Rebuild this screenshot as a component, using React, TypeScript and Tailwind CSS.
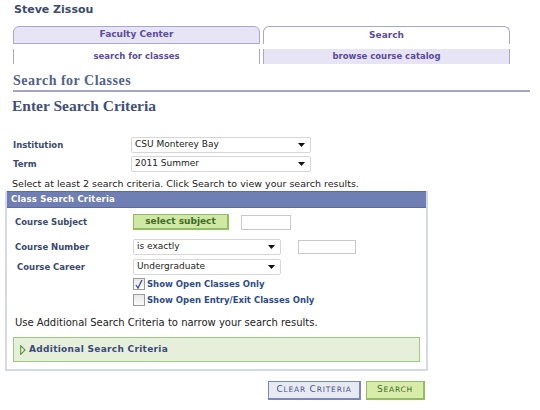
import { useState } from "react"

const sel =
  "flex h-[16px] items-center justify-between rounded-[2px] border border-[#d6d6d6] bg-white pl-[3px] pr-[5px] text-[9px] text-[#222]"

function Caret() {
  return (
    <svg width="7" height="4" viewBox="0 0 7 4">
      <path d="M0 0h7L3.5 4z" fill="#111" />
    </svg>
  )
}

function Select({ value, w }: { value: string; w: string }) {
  return (
    <div className={`${sel} ${w}`}>
      <span>{value}</span>
      <Caret />
    </div>
  )
}

function Check({ on, label }: { on: boolean; label: string }) {
  return (
    <div className="flex h-[16px] items-center gap-[2px]">
      <div className="flex h-[12px] w-[12px] items-center justify-center border border-[#9a9a9a] bg-gradient-to-b from-[#e8e8e8] to-[#fafafa]">
        {on && (
          <svg width="8" height="9" viewBox="0 0 8 9">
            <path d="M1 5l2 3L7 0" stroke="#3b4f8c" strokeWidth="1.3" fill="none" />
          </svg>
        )}
      </div>
      <span className="text-[8.5px] font-bold text-[#2c4a8c]">{label}</span>
    </div>
  )
}

export default function App() {
  const [open] = useState(false)
  return (
    <div className="relative h-[410px] w-[540px] overflow-hidden bg-white font-['DejaVu_Sans',sans-serif] text-[#222]">
      {/* nombre del usuario */}
      <div className="h-[26px] pl-[14px] pt-[2px] text-[11px] font-bold text-[#3c4b6e]">Steve Zissou</div>

      {/* pestañas */}
      <div className="flex gap-[3px] pl-[13px]">
        <div className="flex h-[18px] w-[247px] items-center justify-center rounded-t-[6px] border border-[#aaa5d8] bg-[#e7e4f6] text-[9px] font-bold text-[#5b4b9f]">
          Faculty Center
        </div>
        <div className="flex h-[18px] w-[247px] items-center justify-center rounded-t-[6px] border border-b-0 border-[#aaa5d8] bg-white text-[9px] font-bold text-[#5b4b9f]">
          Search
        </div>
      </div>
      <div className="mt-[5px] flex gap-[3px] pl-[13px]">
        <div className="flex h-[15px] w-[247px] items-center justify-center border-x border-[#aaa5d8] bg-white text-[8.5px] font-bold text-[#5b4b9f]">
          search for classes
        </div>
        <div className="flex h-[15px] w-[247px] items-center justify-center border-x border-[#aaa5d8] bg-[#e7e4f6] text-[8.5px] font-bold text-[#5b4b9f]">
          browse course catalog
        </div>
      </div>

      {/* títulos */}
      <div className="ml-[13px] mr-[10px] mt-[9px] border-b-2 border-[#a3a3cd] pb-[1px] font-['Liberation_Serif',serif] text-[14px] font-bold leading-[16px] tracking-[0.5px] text-[#52628e]">
        Search for Classes
      </div>
      <div className="ml-[12px] mt-[5px] font-['Liberation_Serif',serif] text-[15.5px] font-bold leading-[18px] text-[#3f4f7a]">
        Enter Search Criteria
      </div>

      {/* institución y periodo */}
      <div className="mt-[22px] flex flex-col gap-[3px] pl-[13px]">
        <div className="flex items-center">
          <span className="w-[118px] text-[8.5px] font-bold text-[#3a4a6e]">Institution</span>
          <Select value="CSU Monterey Bay" w="w-[180px]" />
        </div>
        <div className="flex items-center">
          <span className="w-[118px] text-[8.5px] font-bold text-[#3a4a6e]">Term</span>
          <Select value="2011 Summer" w="w-[180px]" />
        </div>
      </div>
      <div className="mt-[5px] pl-[12px] text-[9.5px] leading-[14px] text-[#222]">
        Select at least 2 search criteria. Click Search to view your search results.
      </div>

      {/* caja de criterios */}
      <div className="ml-[5px] w-[423px] border-2 border-t-0 border-[#d5d8e6]">
        <div className="flex h-[17px] items-center border-y border-[#5c6ca3] bg-[#6f7fb3] pl-[4px] text-[8.5px] font-bold tracking-[0.2px] text-white">
          Class Search Criteria
        </div>
        <div className="flex flex-col gap-[4px] pl-[8px] pt-[6px]">
          <div className="flex items-center">
            <span className="w-[118px] text-[8.5px] font-bold text-[#3a4a6e]">Course Subject</span>
            <div className="flex h-[16px] w-[96px] items-center justify-center border border-b-2 border-r-2 border-[#8fbf5f] bg-[#cfe8a3] text-[9px] font-bold text-[#3f6a2a]">
              select subject
            </div>
            <div className="ml-[12px] h-[15px] w-[50px] border border-[#c8c8c8]" />
          </div>
          <div className="mt-[5px] flex items-center">
            <span className="w-[118px] text-[8.5px] font-bold text-[#3a4a6e]">Course Number</span>
            <Select value="is exactly" w="w-[148px]" />
            <div className="ml-[17px] h-[14px] w-[58px] border border-[#c8c8c8]" />
          </div>
          <div className="flex items-center">
            <span className="w-[118px] pl-[2px] text-[8.5px] font-bold text-[#3a4a6e]">Course Career</span>
            <Select value="Undergraduate" w="w-[148px]" />
          </div>
          <div className="-mt-[3px] flex flex-col pl-[118px]">
            <Check on label="Show Open Classes Only" />
            <Check on={false} label="Show Open Entry/Exit Classes Only" />
          </div>
        </div>
        <div className="mt-[8px] pl-[8px] text-[10px] leading-[14px] text-[#222]">
          Use Additional Search Criteria to narrow your search results.
        </div>
        <div className="mx-[6px] mb-[7px] mt-[7px] flex h-[25px] items-center gap-[3px] border border-[#9ccc80] bg-[#e6efd9] pl-[6px]">
          <svg width="6" height="10" viewBox="0 0 6 10">
            <path d="M0.7 0.7L5 5L0.7 9.3z" fill={open ? "#5a9a3a" : "#fff"} stroke="#5a9a3a" strokeWidth="1.2" />
          </svg>
          <span className="text-[9px] font-bold tracking-[0.3px] text-[#3a4a7a]">Additional Search Criteria</span>
        </div>
      </div>

      {/* botones */}
      <div className="mt-[10px] flex gap-[5px] pl-[268px]">
        <div className="flex h-[19px] w-[93px] items-center justify-center border border-b-2 border-r-2 border-[#7b86c0] bg-[#e8eaf3] text-[9px] tracking-[0.8px] text-[#4a558a]">
          C<span className="text-[7.5px]">LEAR</span>&nbsp;C<span className="text-[7.5px]">RITERIA</span>
        </div>
        <div className="flex h-[19px] w-[59px] items-center justify-center border border-b-2 border-r-2 border-[#8fbf5f] bg-[#d7eca9] text-[9px] tracking-[0.8px] text-[#3f6a2a]">
          S<span className="text-[7.5px]">EARCH</span>
        </div>
      </div>
    </div>
  )
}
